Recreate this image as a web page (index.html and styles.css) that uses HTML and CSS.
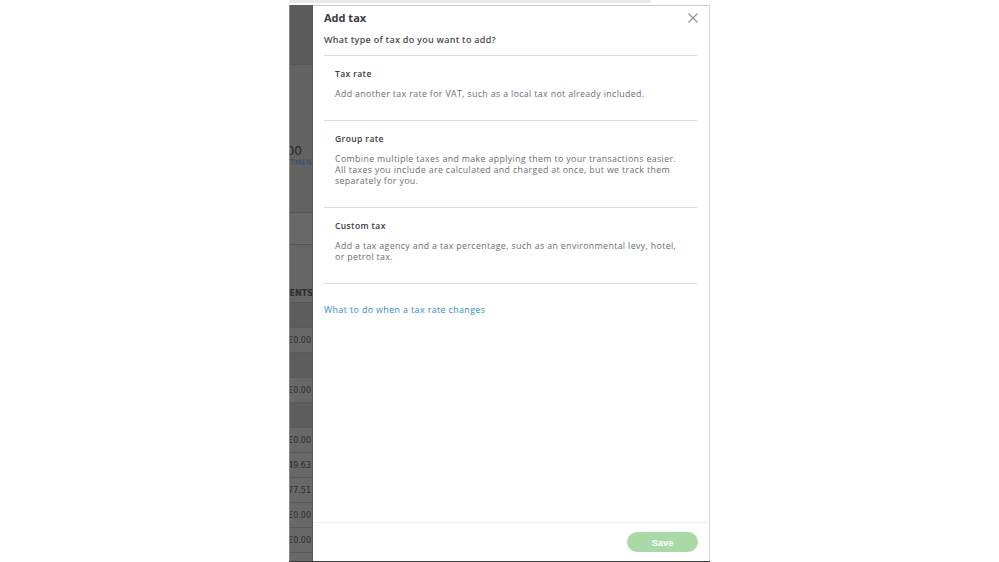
FILE: index.html
```html
<!DOCTYPE html>
<html lang="en">
<head>
<meta charset="utf-8">
<title>Add tax</title>
<link rel="stylesheet" href="styles.css">
</head>
<body>
<div class="topbar"></div>
<div class="frame">
  <div class="backdrop">
    <div class="bg-hero"></div>
    <div class="bg-block">
      <div class="bg-amount">£0.00</div>
      <div class="bg-label">ADJUSTMENTS</div>
    </div>
    <div class="bg-tab"></div>
    <div class="bg-head"><span>ADJUSTMENTS</span></div>
    <div class="bg-row dark"></div>
    <div class="bg-row">£0.00</div>
    <div class="bg-row dark"></div>
    <div class="bg-row">£0.00</div>
    <div class="bg-row dark"></div>
    <div class="bg-row">£0.00</div>
    <div class="bg-row">£249.63</div>
    <div class="bg-row">£177.51</div>
    <div class="bg-row">£0.00</div>
    <div class="bg-row">£0.00</div>
    <div class="bg-row last"></div>
  </div>
  <div class="dialog">
    <div class="dialog-body">
      <div class="dialog-header">
        <h1 class="title">Add tax</h1>
        <button class="close" aria-label="Close">
          <svg width="10" height="10" viewBox="0 0 10 10"><path d="M0.5 0.5 L9.5 9.5 M9.5 0.5 L0.5 9.5" stroke="#8d9096" stroke-width="1.1" fill="none"/></svg>
        </button>
      </div>
      <p class="subtitle">What type of tax do you want to add?</p>
      <div class="options">
        <div class="option">
          <div class="option-title">Tax rate</div>
          <div class="option-desc">Add another tax rate for VAT, such as a local tax not already included.</div>
        </div>
        <div class="option">
          <div class="option-title">Group rate</div>
          <div class="option-desc">Combine multiple taxes and make applying them to your transactions easier.<br>All taxes you include are calculated and charged at once, but we track them<br>separately for you.</div>
        </div>
        <div class="option">
          <div class="option-title">Custom tax</div>
          <div class="option-desc">Add a tax agency and a tax percentage, such as an environmental levy, hotel,<br>or petrol tax.</div>
        </div>
      </div>
      <a class="help-link" href="#">What to do when a tax rate changes</a>
    </div>
    <div class="dialog-footer">
      <button class="save" disabled>Save</button>
    </div>
  </div>
</div>
</body>
</html>
```

FILE: styles.css
```css
* { box-sizing: border-box; }
html, body { margin: 0; padding: 0; }
body {
  background: #ffffff;
  width: 999px;
  height: 562px;
  overflow: hidden;
  font-family: "Open Sans", "Lato", sans-serif;
}
.topbar {
  margin-left: 289px;
  width: 362px;
  height: 3px;
  background: #e9e9ea;
  border-radius: 0 3px 3px 0;
}
.frame {
  margin-top: 2px;
  margin-left: 289px;
  width: 421px;
  height: 557px;
  display: flex;
  border-bottom: 1px solid #3a3a3a;
}
.backdrop {
  width: 24px;
  flex: none;
  display: flex;
  flex-direction: column;
  background: #636363;
  border-left: 1px solid #8a8a8a;
  border-right: 1px solid #555;
  overflow: hidden;
  color: #2c2c2c;
  font-family: "DejaVu Sans", sans-serif;
  font-size: 8px;
}
.bg-hero {
  height: 60px;
  background: #5b5b5b;
  border-bottom: 1px solid #575757;
  flex: none;
}
.bg-block {
  height: 148px;
  flex: none;
  display: flex;
  flex-direction: column;
  align-items: flex-end;
  padding-top: 79px;
  border-bottom: 1px solid #555;
}
.bg-amount {
  font-size: 12px;
  line-height: 14px;
  color: #232323;
  white-space: nowrap;
  margin-right: 10px;
}
.bg-label {
  font-size: 7.5px;
  line-height: 9px;
  color: #2f4d6b;
  white-space: nowrap;
  margin-right: -9px;
}
.bg-tab {
  height: 32px;
  flex: none;
  background: #686868;
  border-bottom: 1px solid #555;
}
.bg-head {
  height: 58px;
  flex: none;
  display: flex;
  justify-content: flex-end;
  align-items: flex-start;
  padding-top: 44px;
  font-size: 8px;
  font-weight: bold;
  white-space: nowrap;
  background: #666666;
  border-bottom: 1px solid #565656;
}
.bg-head span { margin-right: -1px; }
.bg-row {
  height: 25px;
  flex: none;
  display: flex;
  justify-content: flex-end;
  align-items: center;
  white-space: nowrap;
  background: #686868;
  border-bottom: 1px solid #5a5a5a;
  padding-right: 1px;
}
.bg-row.dark { background: #5d5d5d; }
.bg-row.last { height: 10px; border-bottom: none; }
.dialog {
  flex: 1;
  background: #ffffff;
  border-top: 1px solid #c9cacc;
  border-right: 1px solid #d4d7dc;
  display: flex;
  flex-direction: column;
}
.dialog-body {
  flex: 1;
  padding: 5px 12px 0 11px;
}
.dialog-header {
  display: flex;
  justify-content: space-between;
  align-items: center;
  height: 14px;
}
.title {
  margin: 0;
  font-size: 11px;
  line-height: 14px;
  font-weight: 700;
  color: #393a3d;
}
.close {
  border: none;
  background: none;
  padding: 0;
  margin-right: -1px;
  width: 10px;
  height: 10px;
  display: flex;
}
.subtitle {
  margin: 9px 0 0;
  font-size: 9px;
  line-height: 12px;
  font-weight: 600;
  color: #4a4b50;
  letter-spacing: 0.28px;
}
.options {
  margin-top: 9px;
  border-top: 1px solid #dcdde0;
}
.option {
  padding: 12px 11px 20px;
  border-bottom: 1px solid #dcdde0;
}
.option-title {
  font-size: 8.5px;
  line-height: 12px;
  font-weight: 600;
  color: #393a3d;
  letter-spacing: 0.4px;
}
.option-desc {
  margin-top: 9px;
  font-size: 8.8px;
  line-height: 11px;
  color: #6b6c72;
  letter-spacing: 0.36px;
}
.help-link {
  display: inline-block;
  margin-top: 20px;
  font-size: 8.8px;
  line-height: 12px;
  color: #2f8bd0;
  text-decoration: none;
  letter-spacing: 0.42px;
}
.dialog-footer {
  height: 39px;
  flex: none;
  border-top: 1px solid #eceef1;
  display: flex;
  justify-content: flex-end;
  align-items: flex-start;
  padding: 9px 11px 0 0;
}
.save {
  width: 71px;
  height: 20px;
  border: none;
  border-radius: 10px;
  background: #a9d9a5;
  color: #ffffff;
  font-family: "Liberation Sans", sans-serif;
  font-weight: 700;
  font-size: 9.5px;
  padding: 0;
}
```
